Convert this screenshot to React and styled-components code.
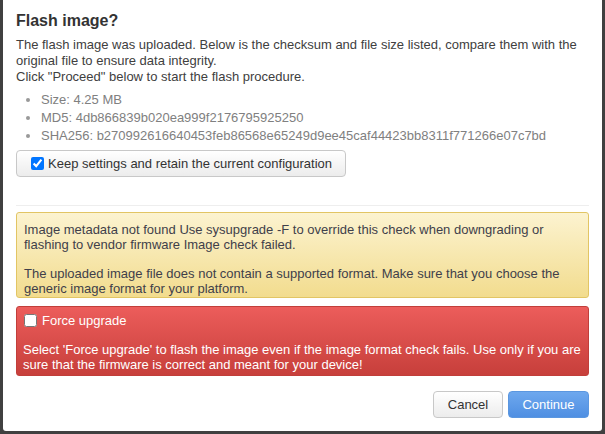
import React from "react";
import styled, { createGlobalStyle } from "styled-components";

const GlobalStyle = createGlobalStyle`
  html, body {
    margin: 0;
    padding: 0;
    background: #404040;
    overflow: hidden;
  }
  body {
    font-family: "Liberation Sans", Arial, sans-serif;
    font-size: 13px;
  }
`;

const Modal = styled.div`
  width: 599px;
  height: 431px;
  margin-left: 3px;
  box-sizing: border-box;
  padding: 12px 13px 13px 13px;
  background: #fff;
  color: #404040;
  border-radius: 0 0 3px 3px;
  display: flex;
  flex-direction: column;
`;

const Title = styled.h4`
  margin: 0;
  font-size: 16px;
  font-weight: bold;
  line-height: 18.4px;
  color: #333;
`;

const Intro = styled.p`
  margin: 7px 0 0 0;
  line-height: 16px;
`;

const InfoList = styled.ul`
  margin: 6px 0 0 0;
  padding-left: 25px;
  color: #808080;
  line-height: 17.8px;

  li::marker {
    color: #999;
  }
`;

const OptionButton = styled.label`
  align-self: flex-start;
  margin-top: 5px;
  height: 27px;
  box-sizing: border-box;
  display: inline-flex;
  align-items: center;
  gap: 4px;
  padding: 0 13px 0 14px;
  border: 1px solid #c8c8c8;
  border-radius: 4px;
  background: linear-gradient(#ffffff, #ececec);
  color: #333;
  input {
    margin: 0;
    width: 13px;
    height: 13px;
  }
`;

const Separator = styled.hr`
  margin: 28px 0 0 0;
  border: 0;
  border-top: 1px solid #eee;
`;

const Alert = styled.div`
  margin-top: ${(p) => p.$gap}px;
  box-sizing: border-box;
  border: 1px solid ${(p) => (p.$danger ? "#c13e3a" : "#e2c564")};
  border-radius: 3px;
  padding: ${(p) => (p.$danger ? "6px 2px 3px 6px" : "9px 8px 1px 7px")};
  background: ${(p) =>
    p.$danger
      ? "linear-gradient(#ec5d5b, #c73f3b)"
      : "linear-gradient(#fcf3d0, #f2dc8e)"};
  color: ${(p) => (p.$danger ? "#fff" : "#3f3f4a")};
  line-height: 15px;
`;

const AlertText = styled.p`
  margin: ${(p) => (p.$first ? "0" : "14px 0 0 0")};
`;

const ForceRow = styled.label`
  display: flex;
  align-items: center;
  gap: 5px;
  height: 15px;
  input {
    margin: 0 0 0 1px;
    width: 13px;
    height: 13px;
  }
`;

const Footer = styled.div`
  margin-top: auto;
  display: flex;
  justify-content: flex-end;
  gap: 5px;
`;

const Button = styled.button`
  height: 27px;
  width: ${(p) => (p.$primary ? "81px" : "70px")};
  box-sizing: border-box;
  padding: 0;
  border-radius: 4px;
  font-family: "Liberation Sans", Arial, sans-serif;
  font-size: 13px;
  border: 1px solid ${(p) => (p.$primary ? "#5b97e0" : "#c8c8c8")};
  background: ${(p) =>
    p.$primary
      ? "linear-gradient(#6ea8ee, #4f8fe2)"
      : "linear-gradient(#ffffff, #ececec)"};
  color: ${(p) => (p.$primary ? "#fff" : "#333")};
`;

export default function App() {
  return (
    <>
      <GlobalStyle />
      <Modal>
        <Title>Flash image?</Title>
        <Intro>
          The flash image was uploaded. Below is the checksum and file size
          listed, compare them with the original file to ensure data integrity.
          <br />
          Click "Proceed" below to start the flash procedure.
        </Intro>
        <InfoList>
          <li>Size: 4.25 MB</li>
          <li>MD5: 4db866839b020ea999f2176795925250</li>
          <li>
            SHA256:
            b270992616640453feb86568e65249d9ee45caf44423bb8311f771266e07c7bd
          </li>
        </InfoList>
        <OptionButton>
          <input type="checkbox" defaultChecked />
          Keep settings and retain the current configuration
        </OptionButton>
        <Separator />
        <Alert $gap={6}>
          <AlertText $first>
            Image metadata not found Use sysupgrade -F to override this check
            when downgrading or flashing to vendor firmware Image check failed.
          </AlertText>
          <AlertText>
            The uploaded image file does not contain a supported format. Make
            sure that you choose the generic image format for your platform.
          </AlertText>
        </Alert>
        <Alert $gap={8} $danger>
          <ForceRow>
            <input type="checkbox" />
            Force upgrade
          </ForceRow>
          <AlertText>
            Select 'Force upgrade' to flash the image even if the image format
            check fails. Use only if you are sure that the firmware is correct
            and meant for your device!
          </AlertText>
        </Alert>
        <Footer>
          <Button>Cancel</Button>
          <Button $primary>Continue</Button>
        </Footer>
      </Modal>
    </>
  );
}
